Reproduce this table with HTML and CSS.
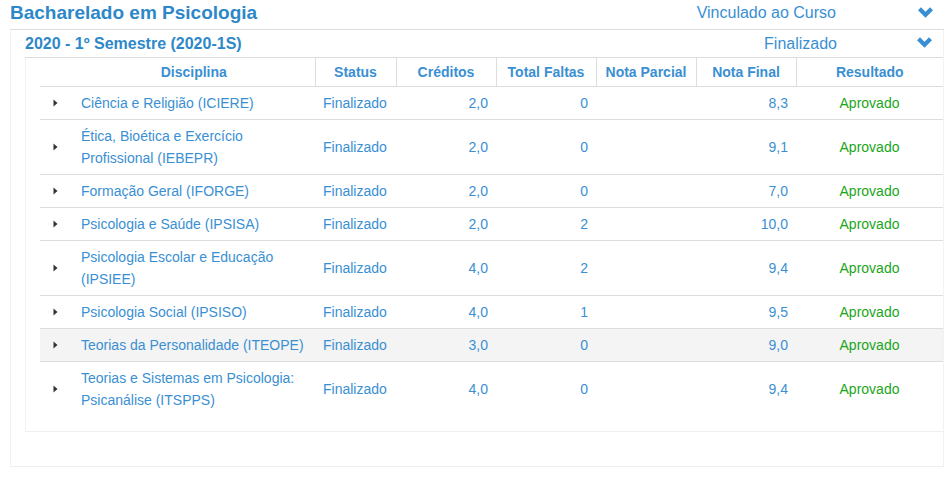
FILE: index.html
```html
<!DOCTYPE html>
<html lang="pt-BR">
<head>
<meta charset="utf-8">
<title>Bacharelado em Psicologia</title>
<link rel="stylesheet" href="styles.css">
</head>
<body>
<div class="course">
  <div class="course-head">
    <h1 class="course-title">Bacharelado em Psicologia</h1>
    <span class="course-status">Vinculado ao Curso</span>
    <svg class="chev chev-a" width="15" height="11" viewBox="0 0 15 11"><path d="M0 3.2 L3 0.2 L7.5 4.7 L12 0.2 L15 3.2 L7.5 10.7 Z" fill="#3a8fd3"/></svg>
  </div>
  <div class="course-body">
    <div class="sem-head">
      <h2 class="sem-title">2020 - 1º Semestre (2020-1S)</h2>
      <span class="sem-status">Finalizado</span>
      <svg class="chev chev-b" width="15" height="11" viewBox="0 0 15 11"><path d="M0 3.2 L3 0.2 L7.5 4.7 L12 0.2 L15 3.2 L7.5 10.7 Z" fill="#3a8fd3"/></svg>
    </div>
    <div class="sem-body">
      <table class="grades">
        <colgroup>
          <col class="c-arrow"><col class="c-disc"><col class="c-status"><col class="c-num"><col class="c-num"><col class="c-num"><col class="c-num"><col>
        </colgroup>
        <thead>
          <tr>
            <th></th>
            <th>Disciplina</th>
            <th class="bl">Status</th>
            <th class="bl">Créditos</th>
            <th class="bl">Total Faltas</th>
            <th class="bl">Nota Parcial</th>
            <th class="bl">Nota Final</th>
            <th class="bl">Resultado</th>
          </tr>
        </thead>
        <tbody>
          <tr>
            <td class="arrow"><svg class="tri" width="5" height="8" viewBox="0 0 5 8"><path d="M0.5 0.5 L4.5 4 L0.5 7.5 Z" fill="#333"/></svg></td>
            <td>Ciência e Religião (ICIERE)</td>
            <td>Finalizado</td><td class="r">2,0</td><td class="r">0</td><td></td><td class="r">8,3</td><td class="ok">Aprovado</td>
          </tr>
          <tr>
            <td class="arrow"><svg class="tri" width="5" height="8" viewBox="0 0 5 8"><path d="M0.5 0.5 L4.5 4 L0.5 7.5 Z" fill="#333"/></svg></td>
            <td>Ética, Bioética e Exercício Profissional (IEBEPR)</td>
            <td>Finalizado</td><td class="r">2,0</td><td class="r">0</td><td></td><td class="r">9,1</td><td class="ok">Aprovado</td>
          </tr>
          <tr>
            <td class="arrow"><svg class="tri" width="5" height="8" viewBox="0 0 5 8"><path d="M0.5 0.5 L4.5 4 L0.5 7.5 Z" fill="#333"/></svg></td>
            <td>Formação Geral (IFORGE)</td>
            <td>Finalizado</td><td class="r">2,0</td><td class="r">0</td><td></td><td class="r">7,0</td><td class="ok">Aprovado</td>
          </tr>
          <tr>
            <td class="arrow"><svg class="tri" width="5" height="8" viewBox="0 0 5 8"><path d="M0.5 0.5 L4.5 4 L0.5 7.5 Z" fill="#333"/></svg></td>
            <td>Psicologia e Saúde (IPSISA)</td>
            <td>Finalizado</td><td class="r">2,0</td><td class="r">2</td><td></td><td class="r">10,0</td><td class="ok">Aprovado</td>
          </tr>
          <tr>
            <td class="arrow"><svg class="tri" width="5" height="8" viewBox="0 0 5 8"><path d="M0.5 0.5 L4.5 4 L0.5 7.5 Z" fill="#333"/></svg></td>
            <td>Psicologia Escolar e Educação (IPSIEE)</td>
            <td>Finalizado</td><td class="r">4,0</td><td class="r">2</td><td></td><td class="r">9,4</td><td class="ok">Aprovado</td>
          </tr>
          <tr>
            <td class="arrow"><svg class="tri" width="5" height="8" viewBox="0 0 5 8"><path d="M0.5 0.5 L4.5 4 L0.5 7.5 Z" fill="#333"/></svg></td>
            <td>Psicologia Social (IPSISO)</td>
            <td>Finalizado</td><td class="r">4,0</td><td class="r">1</td><td></td><td class="r">9,5</td><td class="ok">Aprovado</td>
          </tr>
          <tr class="hl">
            <td class="arrow"><svg class="tri" width="5" height="8" viewBox="0 0 5 8"><path d="M0.5 0.5 L4.5 4 L0.5 7.5 Z" fill="#333"/></svg></td>
            <td>Teorias da Personalidade (ITEOPE)</td>
            <td>Finalizado</td><td class="r">3,0</td><td class="r">0</td><td></td><td class="r">9,0</td><td class="ok">Aprovado</td>
          </tr>
          <tr>
            <td class="arrow"><svg class="tri" width="5" height="8" viewBox="0 0 5 8"><path d="M0.5 0.5 L4.5 4 L0.5 7.5 Z" fill="#333"/></svg></td>
            <td>Teorias e Sistemas em Psicologia: Psicanálise (ITSPPS)</td>
            <td>Finalizado</td><td class="r">4,0</td><td class="r">0</td><td></td><td class="r">9,4</td><td class="ok">Aprovado</td>
          </tr>
        </tbody>
      </table>
    </div>
  </div>
</div>
</body>
</html>
```
FILE: styles.css
```css
html, body {
  margin: 0;
  padding: 0;
  background: #ffffff;
}
body {
  font-family: "Liberation Sans", Arial, sans-serif;
  color: #3a8fd3;
}
.course {
  margin-left: 10px;
  width: 934px;
}
.course-head {
  display: flex;
  align-items: flex-start;
  padding: 2px 11px 5px 0;
  border-bottom: 1px solid #dddddd;
}
.course-title {
  flex: 1;
  margin: 0;
  font-size: 19px;
  line-height: 22px;
  font-weight: bold;
  color: #2d88c9;
}
.course-status,
.sem-status {
  font-size: 16px;
  line-height: 22px;
  color: #3a8fd3;
}
.chev {
  display: block;
  flex: none;
  margin-left: 81px;
}
.chev-a { margin-top: 5px; margin-left: 82px; }
.chev-b { margin-top: 4px; margin-left: 80px; }
.course-body {
  border-left: 1px solid #f2f2f2;
  border-right: 1px solid #f2f2f2;
  border-bottom: 1px solid #efefef;
  padding: 0 0 34px 14px;
}
.sem-head {
  display: flex;
  align-items: flex-start;
  padding: 3px 11px 2px 0;
  border-bottom: 1px solid #dddddd;
}
.sem-title {
  flex: 1;
  margin: 0;
  font-size: 16px;
  line-height: 22px;
  font-weight: bold;
  color: #2d88c9;
}
.sem-body {
  border-left: 1px solid #f2f2f2;
  border-bottom: 1px solid #efefef;
  padding: 0 0 15px 14px;
}
.grades {
  width: 903px;
  table-layout: fixed;
  border-collapse: collapse;
  font-size: 14px;
  line-height: 22px;
}
.c-arrow { width: 33px; }
.c-disc { width: 242px; }
.c-status { width: 81px; }
.c-num { width: 100px; }
.grades th {
  padding: 3px 8px;
  font-weight: bold;
  text-align: center;
  color: #3a8fd3;
  border-bottom: 1px solid #dddddd;
}
.grades th.bl {
  border-left: 1px solid #dddddd;
}
.grades td {
  padding: 5px 8px;
  vertical-align: middle;
  color: #3a8fd3;
  border-bottom: 1px solid #dddddd;
}
.grades tbody tr:last-child td {
  border-bottom: none;
}
.grades td.r { text-align: right; }
.grades td.ok {
  text-align: center;
  color: #1aa61a;
}
.grades tr.hl td { background: #f4f4f4; }
.grades td.arrow {
  padding: 0 0 0 13px;
  text-align: left;
}
.tri {
  display: block;
}
```
